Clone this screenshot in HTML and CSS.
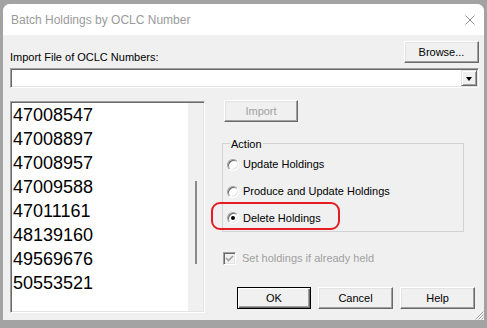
FILE: index.html
```html
<!DOCTYPE html>
<html>
<head>
<meta charset="utf-8">
<title>Batch Holdings by OCLC Number</title>
<link rel="stylesheet" href="styles.css">
</head>
<body>
<div class="window">
  <div class="titlebar">
    <span class="title">Batch Holdings by OCLC Number</span>
    <svg class="close" width="10" height="10" viewBox="0 0 10 10"><path d="M0.5 0.5 L9.5 9.5 M9.5 0.5 L0.5 9.5" stroke="#8c8c8c" stroke-width="1" fill="none"/></svg>
  </div>
  <div class="content">
    <div class="row-top">
      <span class="label">Import File of OCLC Numbers:</span>
      <button class="btn browse">Browse...</button>
    </div>
    <div class="combo">
      <div class="combo-field"></div>
      <div class="combo-btn"><span class="tri"></span></div>
    </div>
    <div class="main">
      <div class="listbox">
        <div class="items">
          <div class="item">47008547</div>
          <div class="item">47008897</div>
          <div class="item">47008957</div>
          <div class="item">47009588</div>
          <div class="item">47011161</div>
          <div class="item">48139160</div>
          <div class="item">49569676</div>
          <div class="item">50553521</div>
        </div>
        <div class="scroll"><div class="thumb"></div></div>
      </div>
      <div class="right">
        <button class="btn import" disabled>Import</button>
        <div class="group">
          <span class="legend">Action</span>
          <div class="radio-row"><span class="radio"></span><span>Update Holdings</span></div>
          <div class="radio-row"><span class="radio"></span><span>Produce and Update Holdings</span></div>
          <div class="radio-row delete"><span class="radio checked"></span><span>Delete Holdings</span><span class="highlight"></span></div>
        </div>
        <div class="check-row">
          <span class="check"><svg width="9" height="9" viewBox="0 0 9 9"><path d="M1 4 L3.5 6.5 L8 2" stroke="#a0a0a0" stroke-width="1.6" fill="none"/></svg></span>
          <span class="check-label">Set holdings if already held</span>
        </div>
        <div class="buttons">
          <button class="btn ok">OK</button>
          <button class="btn cancel">Cancel</button>
          <button class="btn help">Help</button>
        </div>
      </div>
    </div>
  </div>
  <svg class="grip" width="10" height="10" viewBox="0 0 10 10">
    <path d="M9.5 1.5 L1.5 9.5 M9.5 4.5 L4.5 9.5 M9.5 7.5 L7.5 9.5" stroke="#a0a0a0" stroke-width="1" fill="none"/>
    <path d="M9.5 2.5 L2.5 9.5 M9.5 5.5 L5.5 9.5 M9.5 8.5 L8.5 9.5" stroke="#ffffff" stroke-width="1" fill="none"/>
  </svg>
</div>
</body>
</html>
```

FILE: styles.css
```css
html, body {
  margin: 0;
  padding: 0;
}
body {
  background: #a3a3a3;
  width: 487px;
  height: 328px;
  overflow: hidden;
  font-family: "Liberation Sans", Arial, sans-serif;
  font-size: 11px;
  color: #000;
}
.window {
  position: relative;
  margin: 4px 0 0 3px;
  width: 481px;
  height: 316px;
  background: #f0f0f0;
  border-radius: 7px 7px 0 0;
  overflow: hidden;
}
.titlebar {
  height: 31px;
  background: #ffffff;
  display: flex;
  align-items: center;
  justify-content: space-between;
  padding: 0 9px 0 8px;
}
.title {
  font-size: 12px;
  color: #9a9a9a;
  line-height: 14px;
}
.close {
  display: block;
}
.content {
  padding: 0 5px 0 7px;
}
.row-top {
  margin-top: 6px;
  height: 22px;
  display: flex;
  justify-content: space-between;
  align-items: flex-start;
}
.label {
  margin-top: 10px;
  line-height: 13px;
}
.btn {
  box-sizing: border-box;
  height: 22px;
  padding: 0;
  margin: 0;
  font-family: "Liberation Sans", Arial, sans-serif;
  font-size: 11px;
  color: #000;
  background: #f0f0f0;
  border: 1px solid;
  border-color: #ffffff #696969 #696969 #ffffff;
  box-shadow: inset -1px -1px #a0a0a0, inset 1px 1px #e3e3e3;
  border-radius: 0;
}
.browse {
  width: 75px;
}
.combo {
  margin-top: 5px;
  height: 20px;
  box-sizing: border-box;
  display: flex;
  background: #fff;
  border: 1px solid;
  border-color: #a0a0a0 #ffffff #ffffff #a0a0a0;
  box-shadow: inset 1px 1px #696969, inset -1px -1px #e3e3e3;
  padding: 1px;
}
.combo-field {
  flex: 1;
}
.combo-btn {
  box-sizing: border-box;
  width: 16px;
  height: 16px;
  background: #f0f0f0;
  border: 1px solid;
  border-color: #e3e3e3 #696969 #696969 #e3e3e3;
  box-shadow: inset 1px 1px #ffffff, inset -1px -1px #a0a0a0;
  display: flex;
  align-items: center;
  justify-content: center;
}
.tri {
  width: 0;
  height: 0;
  border-left: 3.5px solid transparent;
  border-right: 3.5px solid transparent;
  border-top: 4px solid #000;
  margin-top: 1px;
}
.main {
  margin-top: 13px;
  display: grid;
  grid-template-columns: 195px 256px;
  column-gap: 17px;
  align-items: start;
}
.listbox {
  box-sizing: border-box;
  height: 212px;
  display: flex;
  border: 1px solid;
  border-color: #a0a0a0 #ffffff #ffffff #a0a0a0;
  box-shadow: inset 1px 1px #696969, inset -1px -1px #e3e3e3;
  padding: 1px;
  background: #fff;
}
.items {
  flex: 1;
  background: #fff;
  padding-left: 1px;
  overflow: hidden;
}
.item {
  font-size: 18px;
  line-height: 24px;
  height: 24px;
}
.scroll {
  width: 15px;
  background: #f0f0f0;
}
.thumb {
  margin: 78px 0 0 7px;
  width: 2px;
  height: 83px;
  background: #8a8a8a;
}
.right {
  margin-top: -1px;
}
.import {
  display: block;
  margin-left: 2px;
  width: 74px;
  color: #a0a0a0;
}
.group {
  margin-top: 21px;
  width: 242px;
  box-sizing: border-box;
  border: 1px solid #d3d3d3;
  padding: 0;
}
.legend {
  display: block;
  width: fit-content;
  margin: -6px 0 0 7px;
  padding: 0 1px;
  line-height: 13px;
  background: #f0f0f0;
}
.radio-row {
  height: 27px;
  display: flex;
  align-items: center;
  padding-left: 4px;
  line-height: 13px;
}
.radio-row.delete {
  position: relative;
  height: 26px;
}
.radio {
  box-sizing: border-box;
  width: 12px;
  height: 12px;
  border-radius: 50%;
  background: #fff;
  border: 1px solid;
  border-color: #a0a0a0 #ffffff #ffffff #a0a0a0;
  box-shadow: inset 1px 1px #696969, inset -1px -1px #e3e3e3;
  margin-right: 4px;
  display: flex;
  align-items: center;
  justify-content: center;
}
.radio.checked::after {
  content: "";
  width: 4px;
  height: 4px;
  border-radius: 50%;
  background: #000;
}
.highlight {
  position: absolute;
  left: -12px;
  top: -3px;
  width: 129px;
  height: 28px;
  box-sizing: border-box;
  border: 2px solid #e51c23;
  border-radius: 9px;
}
.check-row {
  margin: 19px 0 0 1px;
  height: 14px;
  display: flex;
  align-items: center;
  line-height: 13px;
}
.check {
  box-sizing: border-box;
  width: 13px;
  height: 13px;
  background: #f0f0f0;
  border: 1px solid;
  border-color: #a0a0a0 #ffffff #ffffff #a0a0a0;
  box-shadow: inset 1px 1px #696969, inset -1px -1px #e3e3e3;
  display: flex;
  align-items: center;
  justify-content: center;
  margin-right: 6px;
}
.check svg {
  display: block;
}
.check-label {
  color: #a0a0a0;
}
.buttons {
  margin: 22px 0 0 15px;
  display: flex;
  gap: 7px;
}
.ok {
  width: 74px;
  border: 1px solid #000;
  box-shadow: inset 1px 1px #ffffff, inset -1px -1px #696969, inset -2px -2px #a0a0a0;
}
.cancel, .help {
  width: 75px;
}
.grip {
  position: absolute;
  right: 0;
  bottom: 0;
}
```
